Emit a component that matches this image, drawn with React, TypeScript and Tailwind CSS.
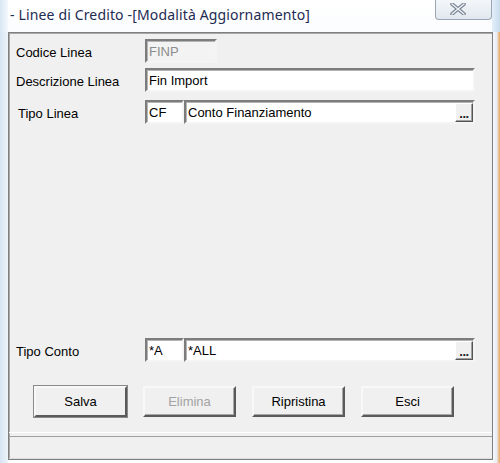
import React from "react";

const font = { fontFamily: '"Liberation Sans", Arial, sans-serif' };

function Field({ w, value, muted, dots }: { w: string; value: string; muted?: boolean; dots?: boolean }) {
  return (
    <div
      className={`${w} h-[24px] flex items-center border-2 border-t-[#7c7c7c] border-l-[#7c7c7c] border-b-[#f4f4f4] border-r-[#f4f4f4] shadow-[inset_1px_1px_0_#b4b4b4] ${
        muted ? "bg-[#f3f3f3] text-[#8c8c8c]" : "bg-white text-black"
      }`}
    >
      <span className="pl-[2px] text-[13px] leading-none flex-1 whitespace-nowrap">{value}</span>
      {dots && (
        <div className="w-[18px] h-[19px] mr-[0px] flex items-end justify-center pb-[2px] bg-[#f0f0f0] border border-t-white border-l-white border-b-[#555] border-r-[#555] shadow-[inset_-1px_-1px_0_#a0a0a0]">
          <span className="text-[13px] leading-[10px] font-bold tracking-[-0.5px] text-[#222]">...</span>
        </div>
      )}
    </div>
  );
}

function Btn({ label, disabled, def }: { label: string; disabled?: boolean; def?: boolean }) {
  return (
    <div
      className={`w-[93px] h-[31px] flex items-center justify-center bg-[#f0f0f0] border-2 border-t-[#f8f8f8] border-l-[#f8f8f8] border-b-[#5a5a5a] border-r-[#5a5a5a] ${
        def ? "shadow-[0_0_0_1px_#8a8a8a]" : "shadow-[inset_-1px_-1px_0_#a8a8a8]"
      } text-[13px] ${disabled ? "text-[#a3a3a3]" : "text-black"}`}
    >
      {label}
    </div>
  );
}

function Row({ label, indent, children, className }: { label: string; indent?: boolean; children: React.ReactNode; className?: string }) {
  return (
    <div className={`flex items-center h-[24px] ${className ?? ""}`}>
      <div className={`w-[129px] text-[13px] text-black pt-[4px] ${indent ? "pl-[2px]" : ""}`}>{label}</div>
      {children}
    </div>
  );
}

export default function App() {
  return (
    <div className="w-[500px] h-[463px] overflow-hidden bg-white flex flex-col" style={font}>
      {/* title bar */}
      <div className="h-[32px] flex items-start bg-gradient-to-b from-white to-[#fbfcfe]">
        <div className="w-[8px] h-full bg-gradient-to-r from-[#d8e6f4] to-[#f4f8fc]" />
        <div
          className="pt-[4px] pl-[2px] text-[14px] tracking-[0.15px] text-[#1d2c52] whitespace-nowrap"
          style={{ fontFamily: '"Noto Sans", "Open Sans", sans-serif' }}
        >
          - Linee di Credito -[Modalità Aggiornamento]
        </div>
        <div className="ml-auto w-[57px] h-[20px] rounded-b-[4px] border border-t-0 border-[#9aa6b5] bg-gradient-to-b from-[#f4f7fa] to-[#e2e8ef] flex items-start pl-[14px] pt-[3px]">
          <svg width="16" height="12" viewBox="0 0 16 12">
            <path d="M2 1 L14 11 M14 1 L2 11" stroke="#7a8594" strokeWidth="3.6" strokeLinecap="round" />
            <path d="M2 1 L14 11 M14 1 L2 11" stroke="#eef2f6" strokeWidth="1.4" strokeLinecap="round" />
          </svg>
        </div>
        <div className="w-[8px] h-full bg-gradient-to-r from-[#e3eef9] to-[#c9dcef]" />
      </div>

      <div className="flex flex-1">
        <div className="w-[8px] bg-gradient-to-r from-[#d6e5f4] to-[#eef4fa]" />
        {/* dialog frame */}
        <div className="w-[485px] h-[428px] bg-[#f0f0f0] border border-[#7f7f7f] shadow-[inset_1px_1px_0_#a8a8a8] flex flex-col">
          <div className="pl-[7px] pt-[6px] flex flex-col">
            <Row label="Codice Linea">
              <Field w="w-[72px]" value="FINP" muted />
            </Row>
            <Row label="Descrizione Linea" className="mt-[5px]">
              <Field w="w-[330px]" value="Fin Import" />
            </Row>
            <Row label="Tipo Linea" indent className="mt-[8px]">
              <div className="flex">
                <Field w="w-[39px]" value="CF" />
                <Field w="w-[291px]" value="Conto Finanziamento" dots />
              </div>
            </Row>
            <Row label="Tipo Conto" className="mt-[214px]">
              <div className="flex">
                <Field w="w-[39px]" value="*A" />
                <Field w="w-[291px]" value="*ALL" dots />
              </div>
            </Row>
          </div>

          <div className="flex gap-[16px] pl-[25px] mt-[24px]">
            <Btn label="Salva" def />
            <Btn label="Elimina" disabled />
            <Btn label="Ripristina" />
            <Btn label="Esci" />
          </div>

          <div className="mt-[15px] h-px bg-white" />
          <div className="mt-[3px] h-px bg-[#a0a0a0]" />
          <div className="flex-1 border-b border-[#dcdcdc]" />
        </div>
        <div className="w-[7px] bg-gradient-to-r from-[#f7f9fb] via-[#e7eef6] to-[#e8a55a]" />
      </div>
    </div>
  );
}
